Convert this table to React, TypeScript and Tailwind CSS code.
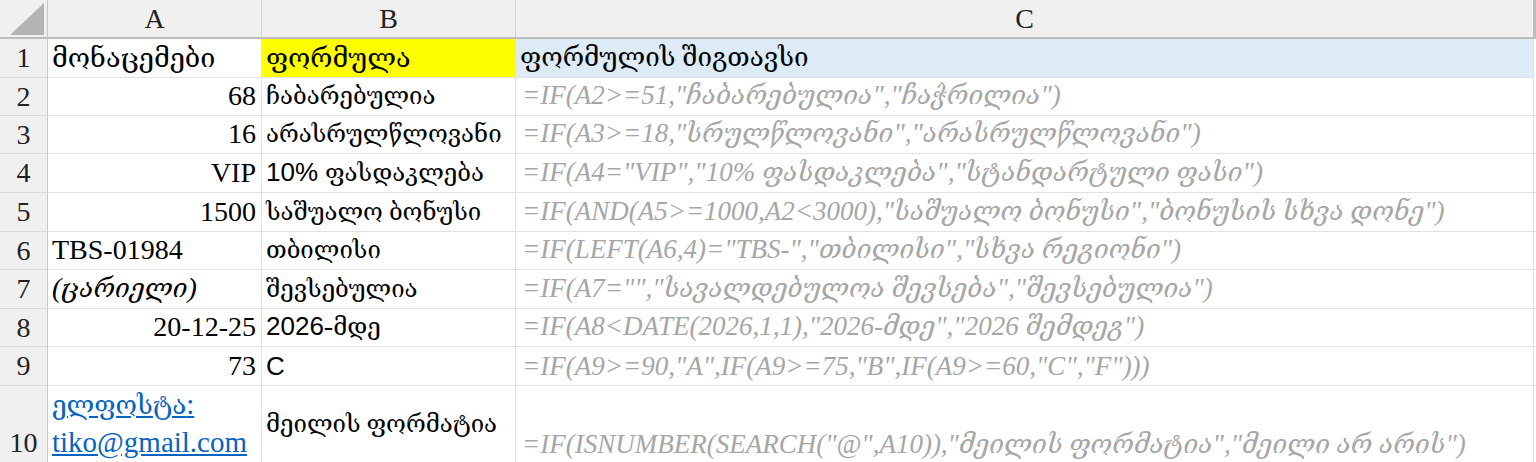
import React from "react";

const serif = "font-['Liberation_Serif','DejaVu_Serif',serif]";
const sans = "font-['Liberation_Sans','DejaVu_Serif',sans-serif]";

function geo(text: string, cls = "text-[24px]") {
  const parts = text.split(/([\u10A0-\u10FF]+(?:\s+[\u10A0-\u10FF]+)*)/);
  return (
    <span>
      {parts.map((p, i) =>
        /[\u10A0-\u10FF]/.test(p) ? (
          <span key={i} className={cls}>
            {p}
          </span>
        ) : (
          <React.Fragment key={i}>{p}</React.Fragment>
        )
      )}
    </span>
  );
}

type Row = {
  n: string;
  a: React.ReactNode;
  aRight?: boolean;
  b: React.ReactNode;
  c: string;
};

const rows: Row[] = [
  { n: "2", a: "68", aRight: true, b: geo("ჩაბარებულია"), c: '=IF(A2>=51,"ჩაბარებულია","ჩაჭრილია")' },
  { n: "3", a: "16", aRight: true, b: geo("არასრულწლოვანი"), c: '=IF(A3>=18,"სრულწლოვანი","არასრულწლოვანი")' },
  {
    n: "4",
    a: "VIP",
    aRight: true,
    b: (
      <span>
        <span className={`${sans} text-[26px]`}>10%</span> <span className="text-[24px]">ფასდაკლება</span>
      </span>
    ),
    c: '=IF(A4="VIP","10% ფასდაკლება","სტანდარტული ფასი")',
  },
  { n: "5", a: "1500", aRight: true, b: geo("საშუალო ბონუსი"), c: '=IF(AND(A5>=1000,A2<3000),"საშუალო ბონუსი","ბონუსის სხვა დონე")' },
  { n: "6", a: "TBS-01984", b: geo("თბილისი"), c: '=IF(LEFT(A6,4)="TBS-","თბილისი","სხვა რეგიონი")' },
  { n: "7", a: <span className="italic">{geo("(ცარიელი)", "text-[26px]")}</span>, b: geo("შევსებულია"), c: '=IF(A7="","სავალდებულოა შევსება","შევსებულია")' },
  {
    n: "8",
    a: "20-12-25",
    aRight: true,
    b: (
      <span>
        <span className={`${sans} text-[26px]`}>2026</span>-<span className="text-[24px]">მდე</span>
      </span>
    ),
    c: '=IF(A8<DATE(2026,1,1),"2026-მდე","2026 შემდეგ")',
  },
  { n: "9", a: "73", aRight: true, b: <span className={`${sans} text-[26px]`}>C</span>, c: '=IF(A9>=90,"A",IF(A9>=75,"B",IF(A9>=60,"C","F")))' },
];

const heights = ["h-[38px]", "h-[38px]", "h-[39px]", "h-[39px]", "h-[38px]", "h-[39px]", "h-[38px]", "h-[39px]"];

function RowHead({ n, h }: { n: string; h: string }) {
  return (
    <div className={`${h} w-[48px] shrink-0 bg-[#f0f0f0] border-r border-r-[#c6c6c6] border-b border-b-[#d9d9d9] flex items-center justify-center text-[28px] leading-none text-[#222]`}>
      {n}
    </div>
  );
}

export default function App() {
  return (
    <div className={`w-[1536px] h-[462px] overflow-hidden bg-white ${serif} text-black`}>
      {/* column header */}
      <div className="flex h-[39px] bg-[#f0f0f0] border-b-2 border-b-[#bdbdbd]">
        <div className="w-[48px] shrink-0 border-r border-r-[#c6c6c6] flex items-end justify-end pr-[3px] pb-[2px]">
          <svg width="34" height="32" viewBox="0 0 34 32">
            <polygon points="0,32 34,32 34,0" fill="#b4b4b4" />
          </svg>
        </div>
        <div className="w-[214px] shrink-0 border-r border-r-[#d4d4d4] flex items-center justify-center text-[28px] leading-none text-[#222]">A</div>
        <div className="w-[254px] shrink-0 border-r border-r-[#d4d4d4] flex items-center justify-center text-[28px] leading-none text-[#222]">B</div>
        <div className="w-[1017px] shrink-0 flex items-center justify-center text-[28px] leading-none text-[#222]">C</div>
        <div className="w-[3px] shrink-0 bg-[#bdbdbd]" />
      </div>

      {/* row 1 */}
      <div className="flex h-[39px]">
        <RowHead n="1" h="h-[39px]" />
        <div className="w-[214px] shrink-0 border-r border-b border-[#e1e1e1] flex items-end pl-[4px] pb-[3px] text-[28px] leading-[32px] whitespace-nowrap overflow-hidden">
          {geo("მონაცემები", "text-[27px]")}
        </div>
        <div className="w-[254px] shrink-0 bg-[#ffff00] border-b border-[#e1e1e1] flex items-end pl-[4px] pb-[3px] text-[28px] leading-[32px] whitespace-nowrap overflow-hidden">
          {geo("ფორმულა", "text-[27px]")}
        </div>
        <div className="w-[1017px] shrink-0 bg-[#ddebf7] border-b border-[#e1e1e1] flex items-end pl-[4px] pb-[3px] text-[28px] leading-[32px] whitespace-nowrap overflow-hidden">
          {geo("ფორმულის შიგთავსი", "text-[26px]")}
        </div>
        <div className="w-[3px] shrink-0 border-l border-[#e1e1e1]" />
      </div>

      {rows.map((r, i) => (
        <div key={r.n} className={`flex ${heights[i]}`}>
          <RowHead n={r.n} h={heights[i]} />
          <div className={`w-[214px] shrink-0 border-r border-b border-[#e1e1e1] flex items-end ${r.aRight ? "justify-end pr-[5px]" : "pl-[4px]"} pb-[3px] text-[28px] leading-[32px] whitespace-nowrap overflow-hidden`}>
            {r.a}
          </div>
          <div className="w-[254px] shrink-0 border-r border-b border-[#e1e1e1] flex items-end pl-[4px] pb-[3px] text-[28px] leading-[32px] whitespace-nowrap overflow-hidden">
            {r.b}
          </div>
          <div className="w-[1017px] shrink-0 border-b border-[#e1e1e1] flex items-end pl-[6px] pb-[3px] text-[27px] leading-[32px] italic text-[#a6a6a6] whitespace-nowrap overflow-hidden">
            {geo(r.c, "text-[26px]")}
          </div>
          <div className="w-[3px] shrink-0 border-l border-b border-[#e1e1e1]" />
        </div>
      ))}

      {/* row 10 */}
      <div className="flex h-[114px]">
        <RowHead n="10" h="h-[114px]" />
        <div className="w-[214px] shrink-0 border-r border-b border-[#e1e1e1] flex flex-col pl-[4px] text-[29px] leading-[36px] text-[#0563c1] underline whitespace-nowrap overflow-hidden">
          {geo("ელფოსტა:", "text-[26px]")}
          <span>tiko@gmail.com</span>
        </div>
        <div className="w-[254px] shrink-0 border-r border-b border-[#e1e1e1] flex items-start pl-[4px] pt-[21px] text-[28px] leading-[32px] whitespace-nowrap overflow-hidden">
          {geo("მეილის ფორმატია")}
        </div>
        <div className="w-[1017px] shrink-0 border-b border-[#e1e1e1] flex items-start pl-[6px] pt-[42px] text-[27px] leading-[32px] italic text-[#a6a6a6] whitespace-nowrap overflow-hidden">
          {geo('=IF(ISNUMBER(SEARCH("@",A10)),"მეილის ფორმატია","მეილი არ არის")', "text-[26px]")}
        </div>
        <div className="w-[3px] shrink-0 border-l border-[#e1e1e1]" />
      </div>
    </div>
  );
}
